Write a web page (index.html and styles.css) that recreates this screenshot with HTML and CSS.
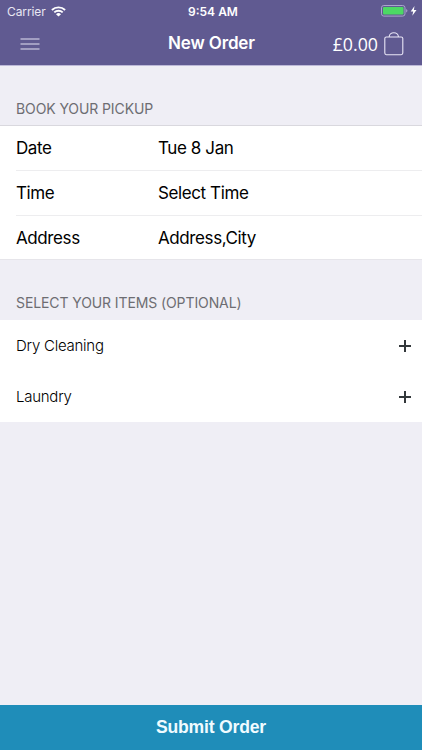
FILE: index.html
```html
<!DOCTYPE html>
<html lang="en">
<head>
 <meta charset="utf-8">
 <meta name="viewport" content="width=device-width, initial-scale=1">
 <title>New Order</title>
 <link rel="stylesheet" href="styles.css">
</head>

<body>
<header>
 <div class="status">
  <div class="carrier">
   <span>Carrier</span>
   <svg class="wifi" width="15" height="11" viewBox="0 0 15 11">
    <path d="M.9 4a9.5 9.5 0 0 1 13.2 0M3.3 6.4a6 6 0 0 1 8.4 0" fill="none" stroke="#fff" stroke-width="1.9"/>
    <path d="M7.5 10.6L5 8.2a3.5 3.5 0 0 1 5 0z" fill="#fff"/>
   </svg>
  </div>
  <div class="clock">9:54 AM</div>
  <div class="power">
   <svg width="37" height="12" viewBox="0 0 37 12">
    <rect x=".5" y=".5" width="23.5" height="10.6" rx="2.3" fill="none" stroke="#aaa6cc"/>
    <rect x="2" y="2" width="20.5" height="7.6" rx="1" fill="#4cd964"/>
    <path d="M25.2 4v3.6q1.2-.6 1.2-1.8t-1.2-1.8z" fill="#aaa6cc"/>
    <path d="M33.5 1L29.7 6.4h2.5L31.3 10.8l4.2-5.9h-2.6z" fill="#fff"/>
   </svg>
  </div>
 </div>
 <div class="nav">
  <div class="menu">
   <svg width="20" height="12" viewBox="0 0 20 12">
    <path d="M.5 1h19M.5 6h19M.5 11h19" stroke="#e4e1f3" stroke-width="1.2"/>
   </svg>
  </div>
  <h1>New Order</h1>
  <div class="basket">
   <span class="total">£0.00</span>
   <svg width="20" height="24" viewBox="0 0 20 24">
    <rect x=".8" y="5" width="18" height="17.7" rx="1.6" fill="none" stroke="#e9e6f6" stroke-width="1.1"/>
    <path d="M5.2 5a4.6 4.2 0 0 1 9.2 0" fill="none" stroke="#e9e6f6" stroke-width="1.1"/>
   </svg>
  </div>
 </div>
</header>

<main>
 <h2>BOOK YOUR PICKUP</h2>
 <div class="pickup">
  <div class="row"><span>Date</span><span>Tue 8 Jan</span></div>
  <div class="row"><span>Time</span><span>Select Time</span></div>
  <div class="row"><span>Address</span><span>Address,City</span></div>
 </div>

 <h2 class="items-title">SELECT YOUR ITEMS (OPTIONAL)</h2>
 <div class="items">
  <div class="item">
   <span>Dry Cleaning</span>
   <svg width="12" height="12" viewBox="0 0 12 12"><path d="M6 0v12M0 6h12" stroke="#33383b" stroke-width="2"/></svg>
  </div>
  <div class="item">
   <span>Laundry</span>
   <svg width="12" height="12" viewBox="0 0 12 12"><path d="M6 0v12M0 6h12" stroke="#33383b" stroke-width="2"/></svg>
  </div>
 </div>
</main>

<div class="submit">Submit Order</div>
</body>
</html>
```
FILE: styles.css
```css
* { box-sizing: border-box; }
body {
  margin: 0;
  height: 750px;
  display: flex;
  flex-direction: column;
  background: #efeef5;
  color: #000;
  font-family: Inter, "Liberation Sans", sans-serif;
  font-size: 17px;
}
header {
  height: 66px;
  flex: none;
  background: #605a91;
  border-bottom: 1px solid #bdb9d8;
  color: #fff;
}
.status {
  display: grid;
  grid-template-columns: 1fr auto 1fr;
  align-items: center;
  height: 22px;
  padding: 0 4px 0 7px;
  font-size: 12px;
}
.carrier { display: flex; align-items: center; gap: 5px; color: #e9e7f3; letter-spacing: -.1px; }
.carrier span { width: 39px; }
.clock { padding-left: 1px; font-weight: 600; }
.power { display: flex; justify-content: flex-end; }
.nav {
  display: grid;
  grid-template-columns: 1fr auto 1fr;
  align-items: center;
  height: 43px;
  padding: 0 18px 0 20px;
}
.menu { display: flex; }
h1 { margin: 0 1px 1px 0; font-size: 17px; font-weight: 600; letter-spacing: -.15px; }
.basket { display: flex; align-items: center; justify-content: flex-end; gap: 6px; }
.total { font-family: "Open Sans", sans-serif; font-size: 17.8px; line-height: 24px; }
main { flex: 1; }
h2 {
  margin: 0;
  height: 59px;
  padding: 33px 16px 0;
  font-size: 14px;
  line-height: 20px;
  font-weight: 400;
  letter-spacing: -.1px;
  color: #6d6d72;
}
.items-title { height: 60px; }
.pickup { background: #fff; border-top: 1px solid #d9d8de; border-bottom: 1px solid #e6e5ea; }
.row {
  display: grid;
  grid-template-columns: 142px 1fr;
  align-items: center;
  height: 45px;
  margin-left: 16px;
  border-bottom: 1px solid #ededef;
  letter-spacing: -.4px;
}
.row:last-child { height: 43px; border-bottom: 0; }
.items { background: #fff; }
.item {
  display: flex;
  align-items: center;
  justify-content: space-between;
  height: 51px;
  padding: 0 11px 0 16px;
  font-size: 15px;
  font-weight: 300;
  letter-spacing: -.25px;
}
.submit {
  flex: none;
  height: 45px;
  background: #1f8db9;
  color: #f0fbff;
  font: bold 17.6px/45px "Liberation Sans", sans-serif;
  letter-spacing: -.2px;
  text-align: center;
}
```
